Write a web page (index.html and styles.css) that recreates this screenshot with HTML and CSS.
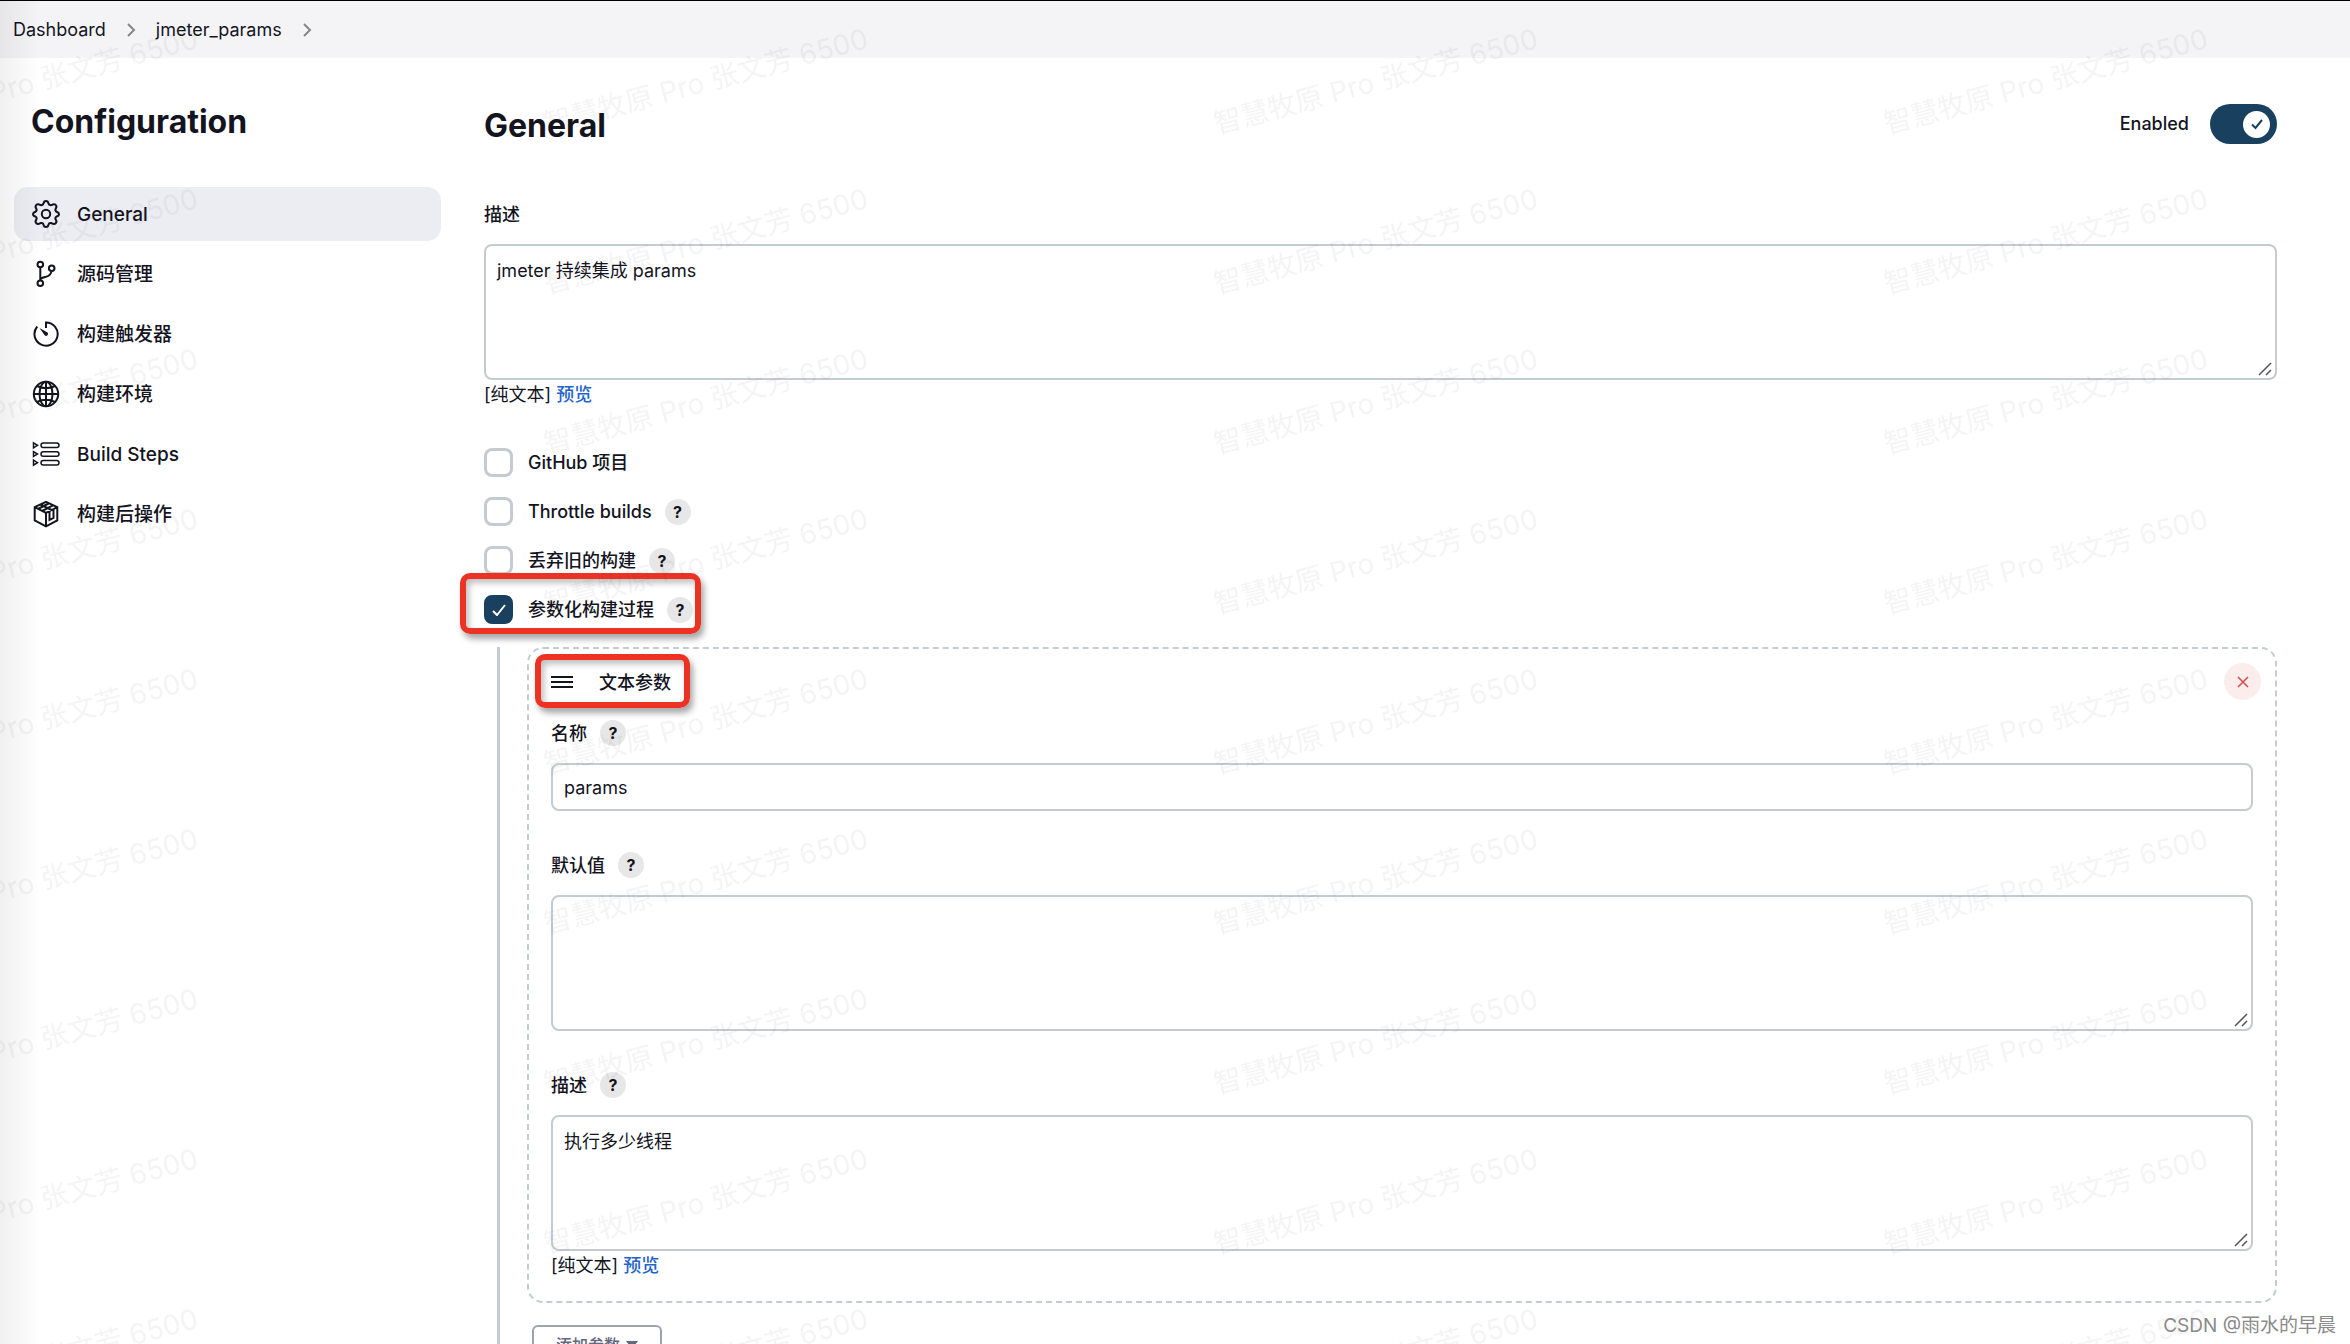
FILE: index.html
```html
<!DOCTYPE html>
<html lang="zh-CN">
<head>
    <meta charset="UTF-8">
    <meta name="viewport" content="width=device-width, initial-scale=1.0">
    <title>jmeter_params Config</title>
    <link rel="stylesheet" href="styles.css">
</head>
<body>
<div class="page">
    <nav class="breadcrumb">
        <a href="#">Dashboard</a>
        <svg class="chevron" viewBox="0 0 10 14"><path d="M2 1l6 6-6 6"/></svg>
        <a href="#">jmeter_params</a>
        <svg class="chevron" viewBox="0 0 10 14"><path d="M2 1l6 6-6 6"/></svg>
    </nav>

    <div class="layout">
        <aside class="sidebar">
            <h1>Configuration</h1>
            <nav class="tasks">
                <a class="task active" href="#">
                    <svg class="icon" viewBox="0 0 28 28"><path d="M11.5 3.600Q11.900 1 14 1t2.500 2.600Q17 5.500 19.400 5.100Q22.300 3.400 23.700 4.900Q25.300 6.500 23.600 8.900Q22.800 10.600 24.600 11.800Q27 12.600 27 14.200T24.600 16.500Q22.800 17.600 23.600 19.400Q25.300 21.800 23.700 23.300Q22.300 24.800 19.400 23.100Q17 22.600 16.500 24.600Q16.100 27 14 27t-2.500-2.400Q11 22.600 8.600 23.100Q5.700 24.800 4.300 23.300Q2.700 21.800 4.400 19.400Q5.200 17.600 3.400 16.500Q1 15.800 1 14.200T3.400 11.800Q5.200 10.600 4.400 8.900Q2.700 6.500 4.300 4.900Q5.700 3.400 8.600 5.100Q11 5.500 11.500 3.600z"/><circle cx="14" cy="14" r="4.200"/></svg>
                    <span>General</span>
                </a>
                <a class="task" href="#">
                    <svg class="icon" viewBox="0 0 28 28"><circle cx="8.300" cy="4.500" r="2.800"/><circle cx="19.700" cy="8.200" r="2.800"/><circle cx="8.300" cy="23.200" r="2.800"/><path d="M8.300 7.500v12.700M8.500 19q1.500-1.500 5.500-2.300 5-1.200 5.500-5.700"/></svg>
                    <span>源码管理</span>
                </a>
                <a class="task" href="#">
                    <svg class="icon" viewBox="0 0 28 28"><path d="M14 8V2.500a11.600 11.600 0 1 1-8.700 4"/><path class="fill" d="M7.500 8l8 4.500a2 2 0 0 1-2.600 3z"/></svg>
                    <span>构建触发器</span>
                </a>
                <a class="task" href="#">
                    <svg class="icon" viewBox="0 0 28 28"><circle cx="14" cy="14" r="12.200"/><ellipse cx="14" cy="14" rx="6.500" ry="12.200"/><path d="M14 1.800v24.400M1.800 14h24.400M5 6q9 4.500 18 0M5 22q9-4.500 18 0"/></svg>
                    <span>构建环境</span>
                </a>
                <a class="task" href="#">
                    <svg class="icon" viewBox="0 0 28 28"><g class="thin"><rect x="9" y="3" width="18" height="4.600" rx="2.300"/><rect x="9" y="11.700" width="18" height="4.600" rx="2.300"/><rect x="9" y="20.400" width="18" height="4.600" rx="2.300"/><path d="M1.500 2.800v5l4-2.500zM1.500 11.500v5l4-2.500zM1.500 20.200v5l4-2.500z"/></g></svg>
                    <span>Build Steps</span>
                </a>
                <a class="task" href="#">
                    <svg class="icon" viewBox="0 0 28 28"><path d="M14 1.800l11.300 5.400v13.300L14 26.300 2.700 20.500V7.200zM2.700 7.200L14 13l11.300-5.800M14 13v13M8.300 4.500L19.500 10M6 9l10.500-5.500M10 11l11-5.600M17.500 11.500v8.300l4-2V9.500"/></svg>
                    <span>构建后操作</span>
                </a>
            </nav>
        </aside>

        <main class="content">
            <form class="config">
                <div class="section-head">
                    <h2>General</h2>
                    <label class="toggle">
                        <span>Enabled</span>
                        <input type="checkbox" checked>
                        <span class="track"><span class="knob"><svg viewBox="0 0 14 12"><path d="M2 6.500l3.500 3.500L12 2"/></svg></span></span>
                    </label>
                </div>

                <div class="field">
                    <div class="field-label"><label class="label-text" for="description">描述</label></div>
                    <div class="area">
                        <textarea id="description">jmeter 持续集成 params</textarea>
                        <svg class="grip" viewBox="0 0 14 14"><path d="M1 13L13 1M8 13l5-5"/></svg>
                    </div>
                    <div class="hint">[纯文本] <a href="#">预览</a></div>
                </div>

                <div class="options">
                    <div class="option">
                        <label class="check"><input type="checkbox"><span>GitHub 项目</span></label>
                    </div>
                    <div class="option">
                        <label class="check"><input type="checkbox"><span>Throttle builds</span></label>
                        <button type="button" class="help">?</button>
                    </div>
                    <div class="option">
                        <label class="check"><input type="checkbox"><span>丢弃旧的构建</span></label>
                        <button type="button" class="help">?</button>
                    </div>
                    <div class="option">
                        <label class="check"><input type="checkbox" checked><span>参数化构建过程</span></label>
                        <button type="button" class="help">?</button>
                        <span class="mark mark-option"></span>
                    </div>
                </div>

                <div class="nested">
                    <div class="param">
                        <div class="param-head">
                            <div class="param-title">
                                <svg class="drag" viewBox="0 0 22 12"><path d="M0 1h22M0 6h22M0 11h22"/></svg>
                                <span class="label-text">文本参数</span>
                                <span class="mark mark-title"></span>
                            </div>
                            <button type="button" class="remove" aria-label="删除"><svg viewBox="0 0 12 12"><path d="M1 1l10 10M11 1L1 11"/></svg></button>
                        </div>
                        <div class="field">
                            <div class="field-label"><label class="label-text" for="name">名称</label><button type="button" class="help">?</button></div>
                            <input class="text" type="text" id="name" value="params">
                        </div>
                        <div class="field">
                            <div class="field-label"><label class="label-text" for="default">默认值</label><button type="button" class="help">?</button></div>
                            <div class="area">
                                <textarea id="default"></textarea>
                                <svg class="grip" viewBox="0 0 14 14"><path d="M1 13L13 1M8 13l5-5"/></svg>
                            </div>
                        </div>
                        <div class="field">
                            <div class="field-label"><label class="label-text" for="param-desc">描述</label><button type="button" class="help">?</button></div>
                            <div class="area">
                                <textarea id="param-desc">执行多少线程</textarea>
                                <svg class="grip" viewBox="0 0 14 14"><path d="M1 13L13 1M8 13l5-5"/></svg>
                            </div>
                            <div class="hint">[纯文本] <a href="#">预览</a></div>
                        </div>
                    </div>
                    <button type="button" class="add">添加参数 <svg viewBox="0 0 12 8"><path d="M0 0h12L6 8z"/></svg></button>
                </div>
            </form>
        </main>
    </div>

    <div class="edge"></div>
    <svg class="watermark">
        <defs>
            <pattern id="wm" x="530" y="24" width="670" height="160" patternUnits="userSpaceOnUse">
                <text x="17" y="110" transform="rotate(-15 17 110)">智慧牧原 Pro 张文芳 6500</text>
            </pattern>
        </defs>
        <rect width="100%" height="100%" fill="url(#wm)"/>
    </svg>
    <div class="credit">CSDN @雨水的早晨</div>
</div>
</body>
</html>
```
FILE: styles.css
```css
* {
    box-sizing: border-box;
}

body {
    margin: 0;
    background: #fff;
    color: #14141f;
    font-family: Inter, "Noto Sans CJK SC", sans-serif;
    font-size: 18px;
    line-height: 28px;
}

a {
    color: inherit;
    text-decoration: none;
}

svg {
    fill: none;
    stroke: currentColor;
    stroke-width: 2;
}

.page {
    position: relative;
    height: 100vh;
    overflow: hidden;
}

/* 顶部导航 */
.breadcrumb {
    display: flex;
    align-items: center;
    gap: 20px;
    height: 58px;
    padding-left: 13px;
    border-top: 1px solid #000;
    background: #f4f4f7;
}

.chevron {
    width: 10px;
    height: 14px;
    color: #85858c;
}

.layout {
    display: flex;
}

/* 左侧菜单 */
.sidebar {
    width: 441px;
    padding: 44px 0 0 14px;
}

h1,
h2 {
    margin: 0;
    font-size: 32px;
    line-height: 40px;
    font-weight: 700;
}

h1 {
    padding-left: 17px;
}

h2 {
    padding-top: 4px;
}

.tasks {
    display: flex;
    flex-direction: column;
    gap: 6px;
    margin-top: 45px;
}

.task {
    display: flex;
    align-items: center;
    gap: 17px;
    height: 54px;
    padding-left: 18px;
    border-radius: 14px;
    font-size: 19px;
    font-weight: 500;
}

.task span,
.label-text {
    padding-top: 2px;
}

.task.active {
    background: #ecedf3;
}

.icon {
    width: 28px;
    height: 28px;
}

.icon .thin {
    stroke-width: 1.5;
}

.icon .fill {
    fill: currentColor;
    stroke: none;
}

/* 右侧表单 */
.content {
    flex: 1;
    padding: 44px 73px 0 43px;
}

.section-head {
    display: flex;
    align-items: center;
    justify-content: space-between;
    margin-bottom: 54px;
}

.toggle {
    display: flex;
    align-items: center;
    gap: 21px;
    font-weight: 500;
    cursor: pointer;
}

.toggle input {
    position: absolute;
    opacity: 0;
}

.track {
    display: flex;
    align-items: center;
    justify-content: flex-end;
    width: 67px;
    height: 40px;
    padding-right: 7px;
    border-radius: 20px;
    background: #1a405f;
}

.knob {
    display: flex;
    align-items: center;
    justify-content: center;
    width: 27px;
    height: 27px;
    border-radius: 50%;
    background: #fff;
    color: #1a405f;
}

.knob svg {
    width: 14px;
    height: 12px;
}

.field-label {
    display: flex;
    align-items: center;
    gap: 13px;
    height: 28px;
    margin-bottom: 16px;
    font-weight: 500;
}

.area {
    position: relative;
}

textarea,
.text {
    display: block;
    width: 100%;
    padding: 9px 11px;
    border: 2px solid #c4cbd1;
    border-radius: 8px;
    background: #fff;
    color: inherit;
    font: inherit;
    outline: none;
}

textarea {
    height: 136px;
    padding-top: 11px;
    resize: none;
}

.text {
    height: 48px;
}

.grip {
    position: absolute;
    right: 5px;
    bottom: 4px;
    width: 14px;
    height: 14px;
    color: #555;
    stroke-width: 1.5;
}

.hint {
    padding-top: 1px;
}

.hint a {
    color: #1f63ce;
    font-weight: 500;
}

.options {
    display: flex;
    flex-direction: column;
    gap: 20px;
    margin: 39px 0 23px;
}

.option {
    position: relative;
    display: flex;
    align-items: center;
    align-self: flex-start;
    gap: 13px;
    height: 29px;
    font-weight: 500;
}

.check {
    display: flex;
    align-items: center;
    gap: 15px;
}

.check input {
    appearance: none;
    width: 29px;
    height: 29px;
    margin: 0;
    border: 3px solid #c4cbd1;
    border-radius: 8px;
    background: #fff;
}

.check input:checked {
    border-color: #1a405f;
    background: #1a405f url("data:image/svg+xml,%3Csvg xmlns='http://www.w3.org/2000/svg' viewBox='0 0 14 12' fill='none' stroke='white' stroke-width='2'%3E%3Cpath d='M1 7l4 4 8-10'/%3E%3C/svg%3E") center / 14px 12px no-repeat;
}

.help {
    width: 26px;
    height: 26px;
    padding: 0;
    border: 0;
    border-radius: 50%;
    background: #e7e7e7;
    color: inherit;
    font: inherit;
    font-size: 16px;
    line-height: 26px;
    font-weight: 700;
}

/* 红色标注框 */
.mark {
    position: absolute;
    border: 6px solid #ec3323;
    border-radius: 10px;
    box-shadow: 3px 5px 6px rgba(0, 0, 0, .35), inset 3px 4px 6px rgba(0, 0, 0, .25);
    pointer-events: none;
}

.mark-option {
    inset: -22px -8px -10px -24px;
}

.mark-title {
    inset: -9px -19px -8px -16px;
}

.nested {
    position: relative;
    margin-left: 13px;
    padding-left: 27px;
    border-left: 3px solid #c4cbd1;
}

.param {
    padding: 14px 22px 21px;
    border: 2px dashed #c4cbd1;
    border-radius: 16px;
}

.param-head {
    display: flex;
    align-items: center;
    justify-content: space-between;
    height: 37px;
    margin: 0 -8px 19px 0;
}

.param-title {
    position: relative;
    display: flex;
    align-items: center;
    gap: 26px;
    height: 37px;
    font-weight: 500;
}

.drag {
    width: 22px;
    height: 12px;
}

.remove {
    display: flex;
    align-items: center;
    justify-content: center;
    width: 37px;
    height: 37px;
    padding: 0;
    border: 0;
    border-radius: 50%;
    background: #fceded;
    color: #d9484a;
}

.remove svg {
    width: 12px;
    height: 12px;
    stroke-width: 1.5;
}

.param .field + .field {
    margin-top: 40px;
}

.add {
    display: flex;
    align-items: center;
    gap: 6px;
    height: 40px;
    margin: 22px 0 0 5px;
    padding: 0 22px;
    border: 2px solid #9aa5af;
    border-radius: 6px;
    background: #fff;
    color: #66667d;
    font: inherit;
    font-size: 16px;
    font-weight: 500;
}

.add svg {
    width: 12px;
    height: 8px;
    fill: currentColor;
    stroke: none;
}

.edge {
    position: absolute;
    inset: 0 auto 0 0;
    width: 40px;
    background: linear-gradient(to right, rgba(0, 0, 0, .06), rgba(0, 0, 0, 0));
    pointer-events: none;
}

/* 水印 */
.watermark {
    position: absolute;
    inset: 0;
    width: 100%;
    height: 100%;
    pointer-events: none;
}

.watermark rect {
    stroke: none;
}

.watermark text {
    fill: rgba(0, 0, 0, .045);
    stroke: none;
    font-size: 28px;
}

.credit {
    position: absolute;
    right: 14px;
    bottom: 4px;
    color: #8a8a8a;
    font-size: 19px;
}
```
